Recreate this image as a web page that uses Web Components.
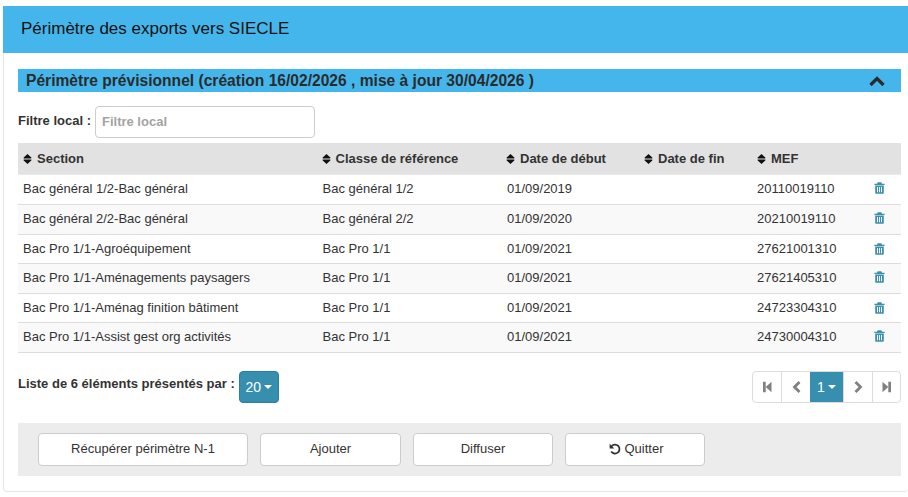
<!DOCTYPE html>
<html lang="fr">
<head>
<meta charset="utf-8">
<title>Périmètre des exports vers SIECLE</title>
<style>
  html, body { margin: 0; padding: 0; background: #fff; }
  body { font: 13px/18px "Liberation Sans", Arial, sans-serif; color: #333; overflow: hidden; }
</style>
</head>
<body>
<export-page>
  <panel-box heading="Périmètre des exports vers SIECLE">
    <section-bar label="Périmètre prévisionnel (création 16/02/2026 , mise à jour 30/04/2026 )"></section-bar>
    <local-filter label="Filtre local :" placeholder="Filtre local"></local-filter>
    <data-table>
      <data-row head a="Section" b="Classe de référence" c="Date de début" d="Date de fin" e="MEF"></data-row>
      <data-row a="Bac général 1/2-Bac général" b="Bac général 1/2" c="01/09/2019" e="20110019110" h="30"></data-row>
      <data-row odd a="Bac général 2/2-Bac général" b="Bac général 2/2" c="01/09/2020" e="20210019110" h="30"></data-row>
      <data-row a="Bac Pro 1/1-Agroéquipement" b="Bac Pro 1/1" c="01/09/2021" e="27621001310" h="29"></data-row>
      <data-row odd a="Bac Pro 1/1-Aménagements paysagers" b="Bac Pro 1/1" c="01/09/2021" e="27621405310" h="30"></data-row>
      <data-row a="Bac Pro 1/1-Aménag finition bâtiment" b="Bac Pro 1/1" c="01/09/2021" e="24723304310" h="29"></data-row>
      <data-row odd a="Bac Pro 1/1-Assist gest org activités" b="Bac Pro 1/1" c="01/09/2021" e="24730004310" h="30"></data-row>
    </data-table>
    <list-footer text="Liste de 6 éléments présentés par :" size="20" page="1"></list-footer>
    <action-bar>
      <action-button style="width:210px">Récupérer périmètre N-1</action-button>
      <action-button style="width:141px">Ajouter</action-button>
      <action-button style="width:140px">Diffuser</action-button>
      <action-button style="width:140px" icon="undo">Quitter</action-button>
    </action-bar>
  </panel-box>
</export-page>

<script>
const ICONS = {
  sort: '<svg viewBox="0 0 9 12" width="9" height="12"><path fill="currentColor" d="M4.500 1 8.300 4.600c.3.400.1.800-.4.800H1.100c-.5 0-.7-.4-.4-.8zM4.500 11 .7 7.400c-.3-.4-.1-.8.4-.8h6.800c.5 0 .7.400.4.800z"/></svg>',
  trash: '<svg viewBox="0 0 11 12" width="11" height="12"><path fill="currentColor" fill-rule="evenodd" d="M3.700.3h3.600l.7 1.400h2.600v1.200H.4V1.700h2.600zM1.200 3.500h8.600v7.200c0 .6-.5 1-1 1H2.200c-.5 0-1-.4-1-1zM3 5v5.200h1V5zm2 0v5.200h1V5zm2 0v5.200h1V5z"/></svg>',
  chevron: '<svg viewBox="0 0 16 11" width="16" height="11"><path fill="none" stroke="currentColor" stroke-width="3.300" d="M1.500 9 8 2.500 14.500 9"/></svg>',
  undo: '<svg viewBox="0 0 12 12" width="12" height="12"><path fill="none" stroke="currentColor" stroke-width="1.800" d="M2.600 3.100A4.500 4.500 0 1 1 2.200 8.500"/><path fill="currentColor" d="M.6.700 5.400 5.500H.6z"/></svg>',
  first: '<svg viewBox="0 0 9 12" width="9" height="12"><path fill="currentColor" d="M0 .8h2.700v10.400H0zM2.700 6 8.500.8v10.400z"/></svg>',
  last: '<svg viewBox="0 0 9 12" width="9" height="12"><path fill="currentColor" d="M9 .8H6.300v10.400H9zM6.300 6 .5.8v10.400z"/></svg>',
  prev: '<svg viewBox="0 0 9 12" width="9" height="12"><path fill="none" stroke="currentColor" stroke-width="2.800" d="M7.500 1 2.500 6l5 5"/></svg>',
  next: '<svg viewBox="0 0 9 12" width="9" height="12"><path fill="none" stroke="currentColor" stroke-width="2.800" d="M1.500 1l5 5-5 5"/></svg>'
};

// small helper, every element below just sets its shadow html once
class Base extends HTMLElement {
  constructor() {
    super();
    this.attachShadow({mode: 'open'});
  }
  connectedCallback() {
    this.shadowRoot.innerHTML = this.render();
  }
  attr(name) {
    return this.getAttribute(name) || '';
  }
}

class ExportPage extends Base {
  render() {
    return `<style>:host { display: block; padding: 6px 0 0 3px; }</style><slot></slot>`;
  }
}

class PanelBox extends Base {
  render() {
    return `<style>
      :host { display: block; width: 905px; height: 486px; box-sizing: border-box; background: #fff;
        border-bottom: 1px solid #e6e6e6; border-left: 1px solid #e6e6e6; border-radius: 0 0 4px 4px; }
      .head { height: 47px; margin-left: -1px; padding: 0 0 0 18px; background: #45b6eb; color: #111;
        font-size: 17px; line-height: 45px; }
      .body { padding: 16px 7px 0 14px; }
    </style>
    <div class="head">${this.attr('heading')}</div>
    <div class="body"><slot></slot></div>`;
  }
}

class SectionBar extends Base {
  render() {
    return `<style>
      :host { display: flex; align-items: center; justify-content: space-between; height: 23px;
        padding: 0 16px 0 8px; background: #45b6eb; color: #2b2b2b; font-weight: bold; font-size: 15.600px; }
      .ico { display: flex; color: #2b2b2b; margin-top: 1px; }
    </style>
    <span>${this.attr('label')}</span><span class="ico">${ICONS.chevron}</span>`;
  }
}

class LocalFilter extends Base {
  render() {
    return `<style>
      :host { display: flex; align-items: center; gap: 4px; height: 32px; margin-top: 14px; }
      label { font-weight: bold; color: #333; margin-top: -2px; }
      input { box-sizing: border-box; width: 220px; height: 32px; padding: 0 6px 2px; border: 1px solid #ccc;
        border-radius: 4px; font: bold 13px "Liberation Sans", Arial, sans-serif; color: #333; outline: none; }
      input::placeholder { color: #a3a3a3; opacity: 1; }
    </style>
    <label>${this.attr('label')}</label><input type="text" placeholder="${this.attr('placeholder')}">`;
  }
}

class DataTable extends Base {
  render() {
    return `<style>
      :host { display: block; margin-top: 5px; --cols: 299.500px 184.500px 137px 113px 1fr; }
    </style><slot></slot>`;
  }
}

class DataRow extends Base {
  render() {
    const head = this.hasAttribute('head');
    const cols = ['a', 'b', 'c', 'd', 'e'].map((k) => {
      const txt = this.attr(k);
      return `<div class="cell ${k}">${head ? `<span class="sort">${ICONS.sort}</span>` : ''}${txt}</div>`;
    }).join('');
    const h = head ? 32 : Number(this.attr('h'));
    return `<style>
      :host { display: grid; grid-template-columns: var(--cols); box-sizing: border-box;
        height: ${h}px; align-items: center; padding-bottom: ${h == 30 ? 1 : 0}px;
        border-bottom: 1px solid ${head ? '#e9e9e9' : '#ddd'};
        background: ${head ? '#e2e2e2' : this.hasAttribute('odd') ? '#f9f9f9' : '#fff'};
        font-weight: ${head ? 'bold' : 'normal'}; position: relative; }
      .cell { padding-left: 5px; white-space: nowrap; display: flex; align-items: center; }
      ${head ? '.b, .c { margin-left: -1px; }' : ''}
      .sort { display: inline-flex; color: #111; margin-right: 5px; }
      .bin { position: absolute; right: 16px; top: ${h == 30 ? 7 : 8}px; display: flex; color: #3a90ae; }
    </style>${cols}${head ? '' : `<span class="bin">${ICONS.trash}</span>`}`;
  }
}

class ListFooter extends Base {
  render() {
    return `<style>
      :host { display: flex; justify-content: space-between; align-items: flex-start; height: 32px; margin-top: 18px; }
      .left { display: flex; align-items: flex-start; gap: 4px; }
      .txt { font-weight: bold; margin-top: 4px; }
      .size { box-sizing: border-box; width: 40px; height: 32px; display: flex; align-items: center; justify-content: center;
        gap: 3px; background: #368fae; border: 1px solid #2f7f9b; border-radius: 4px; color: #fff; font-size: 14px; }
      .caret { width: 0; height: 0; border: 4px solid transparent; border-top-color: #fff; border-bottom: 0; }
      .pager { display: flex; height: 32px; box-sizing: border-box; border: 1px solid #ddd; border-radius: 4px; }
      .p { box-sizing: border-box; width: 29px; display: flex; align-items: center; justify-content: center;
        color: #808080; border-left: 1px solid #ddd; }
      .p:first-child { border-left: 0; width: 28px; }
      .p:last-child { width: 28px; }
      .on { width: 33px; background: #368fae; color: #fff; gap: 3px; font-size: 14px; border-left: 0; }
    </style>
    <div class="left"><span class="txt">${this.attr('text')}</span>
      <div class="size">${this.attr('size')}<span class="caret"></span></div></div>
    <div class="pager">
      <span class="p">${ICONS.first}</span><span class="p">${ICONS.prev}</span>
      <span class="p on">${this.attr('page')}<span class="caret"></span></span>
      <span class="p">${ICONS.next}</span><span class="p">${ICONS.last}</span>
    </div>`;
  }
}

class ActionBar extends Base {
  render() {
    return `<style>
      :host { display: flex; gap: 12px; height: 53px; box-sizing: border-box; margin-top: 20px;
        padding: 10px 0 0 20px; background: #ececec; }
    </style><slot></slot>`;
  }
}

class ActionButton extends Base {
  render() {
    const icon = this.attr('icon');
    return `<style>
      :host { display: flex; align-items: center; justify-content: center; gap: 3px; box-sizing: border-box; height: 33px;
        padding: 0 0 2px ${icon ? 3 : 0}px;
        background: #fff; border: 1px solid #ccc; border-radius: 4px; color: #333; }
      span { display: flex; }
    </style>${icon ? `<span>${ICONS[icon]}</span>` : ''}<slot></slot>`;
  }
}

customElements.define('export-page', ExportPage);
customElements.define('panel-box', PanelBox);
customElements.define('section-bar', SectionBar);
customElements.define('local-filter', LocalFilter);
customElements.define('data-table', DataTable);
customElements.define('data-row', DataRow);
customElements.define('list-footer', ListFooter);
customElements.define('action-bar', ActionBar);
customElements.define('action-button', ActionButton);
</script>
</body>
</html>
